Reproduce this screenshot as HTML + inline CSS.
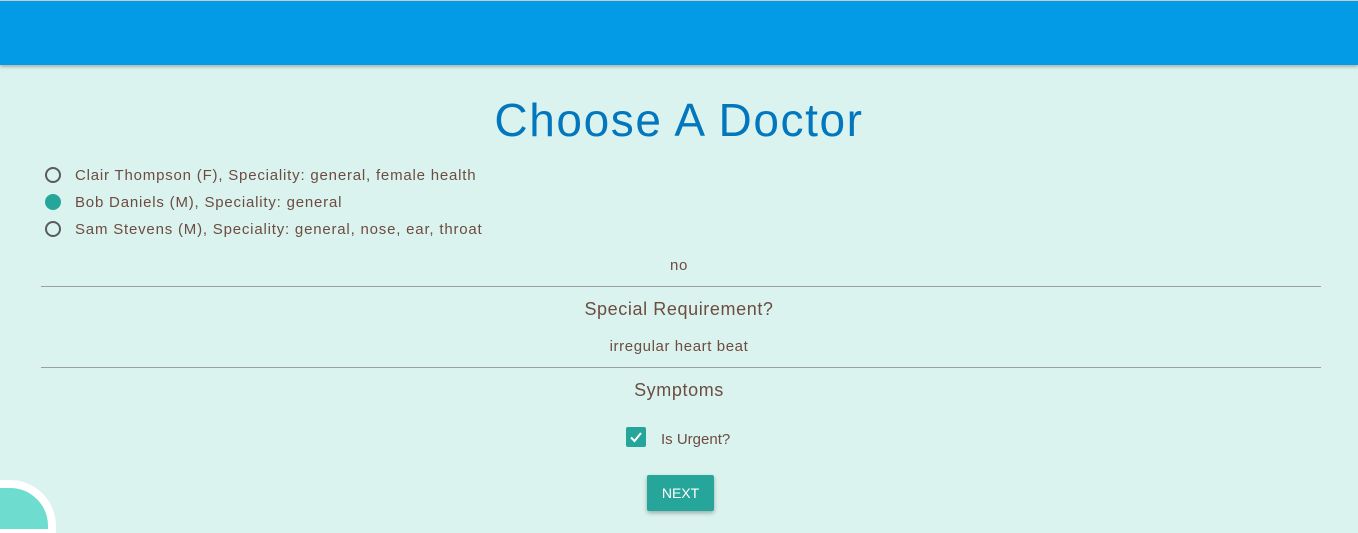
<!DOCTYPE html>
<html><head><meta charset="utf-8"><style>
html,body{margin:0;padding:0;width:1358px;height:533px;overflow:hidden}
body{background:#daf3ef;font-family:"Liberation Sans",sans-serif;color:#6d4c41;position:relative}
.top{position:absolute;left:0;top:1px;width:1358px;height:64px;background:#039be5;box-shadow:0 2px 3px rgba(0,0,0,.25)}
.topline{position:absolute;left:0;top:0;width:1358px;height:1px;background:#ccc}
h1{position:absolute;top:93px;left:0;width:1358px;text-align:center;margin:0;font-weight:normal;font-size:46px;letter-spacing:1.6px;color:#0277bd;line-height:54px}
.r{position:absolute;left:45px;font-size:15px;line-height:20px;letter-spacing:0.8px}
.r i{position:absolute;left:0;top:1px;width:12px;height:12px;border:2px solid #5a5a5a;border-radius:50%}
.r i.on{background:#26a69a;border-color:#26a69a}
.r span{position:absolute;left:30px;white-space:nowrap}
.c{position:absolute;left:0;width:1358px;text-align:center;letter-spacing:0.6px}
.hr{position:absolute;left:41px;width:1280px;height:1px;background:#9e9e9e}
.cb{position:absolute;left:626px;top:427px;width:20px;height:20px;background:#26a69a;border-radius:2px}
.btn{position:absolute;left:647px;top:475px;width:67px;height:36px;background:#26a69a;color:#fff;font-size:14px;line-height:36px;text-align:center;border-radius:2px;box-shadow:0 2px 4px rgba(0,0,0,.3)}
.logo{position:absolute;left:0;top:478px;width:70px;height:55px}
</style></head><body>
<div class="topline"></div><div class="top"></div>
<h1>Choose A Doctor</h1>
<div class="r" style="top:166px"><i></i><span>Clair Thompson (F), Speciality: general, female health</span></div>
<div class="r" style="top:193px"><i class="on"></i><span>Bob Daniels (M), Speciality: general</span></div>
<div class="r" style="top:220px"><i></i><span>Sam Stevens (M), Speciality: general, nose, ear, throat</span></div>
<div class="c" style="top:257px;font-size:15px">no</div>
<div class="hr" style="top:286px"></div>
<div class="c" style="top:299px;font-size:18px">Special Requirement?</div>
<div class="c" style="top:338px;font-size:15px">irregular heart beat</div>
<div class="hr" style="top:367px"></div>
<div class="c" style="top:380px;font-size:18px">Symptoms</div>
<div class="cb"><svg width="20" height="20" viewBox="0 0 20 20"><path d="M5 10.5l3.5 3.5L15 6" stroke="#fff" stroke-width="2" fill="none"/></svg></div>
<div style="position:absolute;left:661px;top:431px;font-size:15px">Is Urgent?</div>
<div class="btn">NEXT</div>
<svg class="logo" viewBox="0 0 70 55"><path d="M-5 6 H10 A42 42 0 0 1 52 48 V55 H-5 Z" fill="#6fdcd0" stroke="#fff" stroke-width="8"/></svg>
</body></html>
